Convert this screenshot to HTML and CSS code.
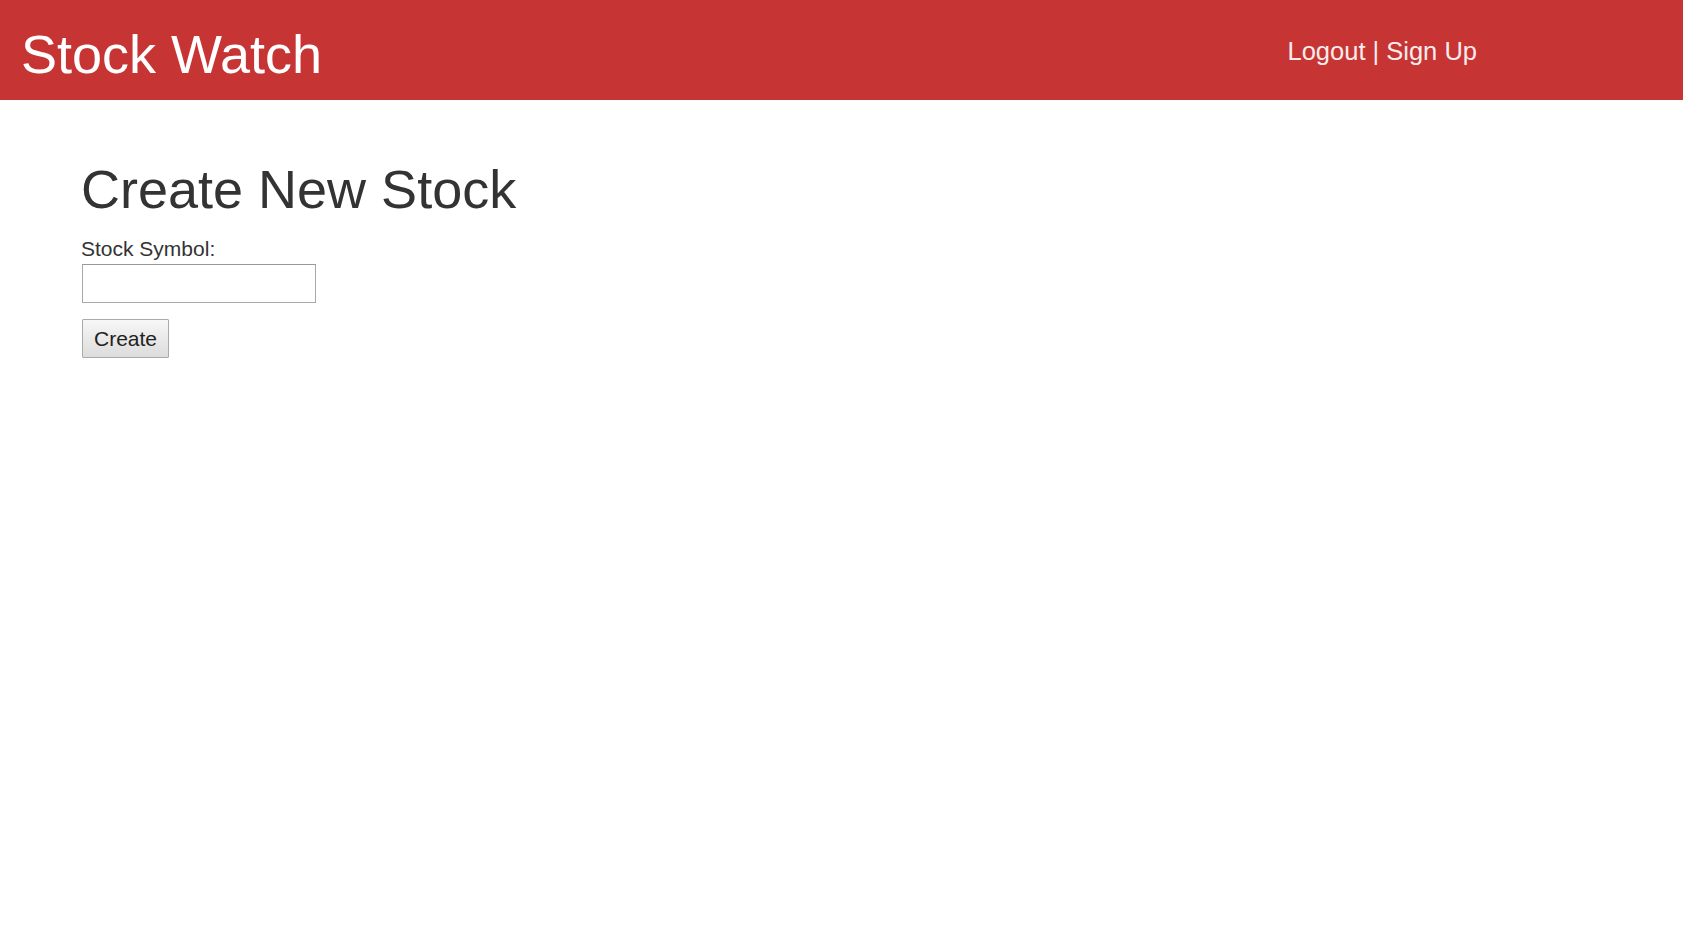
FILE: index.html
```html
<!DOCTYPE html>
<html>
<head>
<meta charset="utf-8">
<title>Stock Watch</title>
<link rel="stylesheet" href="styles.css">
</head>
<body>
<header class="topbar">
  <div class="brand">Stock Watch</div>
  <nav class="auth"><a href="#">Logout</a> | <a href="#">Sign Up</a></nav>
</header>
<main class="content">
  <h1 class="page-title">Create New Stock</h1>
  <form class="stock-form">
    <label class="field-label" for="symbol">Stock Symbol:</label>
    <input class="field-input" id="symbol" type="text">
    <button class="btn" type="button">Create</button>
  </form>
</main>
</body>
</html>
```
FILE: styles.css
```css
html, body {
  margin: 0;
  padding: 0;
  background: #fff;
  font-family: "Liberation Sans", Arial, sans-serif;
}
.topbar {
  height: 100px;
  box-sizing: border-box;
  background: #c73434;
  color: #fff;
  display: flex;
  align-items: flex-start;
  justify-content: space-between;
}
.brand {
  font-size: 54px;
  line-height: 62px;
  padding: 23px 0 0 21px;
}
.auth {
  font-size: 25.5px;
  line-height: 28px;
  padding: 37px 206px 0 0;
  color: #fbecec;
}
.auth a {
  color: #fbecec;
  text-decoration: none;
}
.content {
  padding: 58px 0 0 81px;
}
.page-title {
  margin: 0;
  font-weight: normal;
  font-size: 54px;
  line-height: 62px;
  color: #333;
}
.stock-form {
  display: flex;
  flex-direction: column;
  align-items: flex-start;
  margin-top: 17px;
}
.field-label {
  font-size: 21px;
  line-height: 24px;
  color: #333;
}
.field-input {
  margin: 3px 0 0 1px;
  width: 234px;
  height: 39px;
  box-sizing: border-box;
  border: 1px solid #a8a8a8;
  border-top-color: #999;
  padding: 0 4px;
  font-size: 18px;
  font-family: inherit;
}
.btn {
  margin: 16px 0 0 1px;
  height: 39px;
  width: 87px;
  box-sizing: border-box;
  border: 1px solid #aaa;
  border-radius: 1px;
  background: linear-gradient(#f7f7f7, #dcdcdc);
  font-family: inherit;
  font-size: 21px;
  color: #222;
  padding: 0;
}
```
